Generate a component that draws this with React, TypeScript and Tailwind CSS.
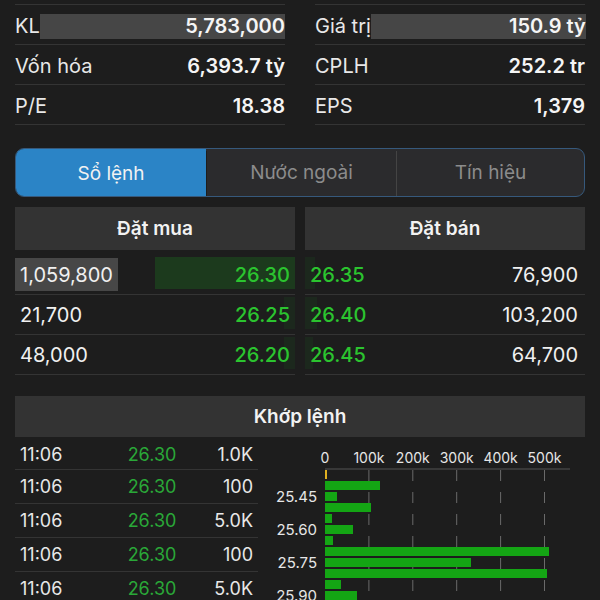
import React from "react";

const leftStats = [
  { l: "KL", v: "5,783,000", hl: true },
  { l: "Vốn hóa", v: "6,393.7 tỷ" },
  { l: "P/E", v: "18.38" },
];
const rightStats = [
  { l: "Giá trị", v: "150.9 tỷ", hl: true },
  { l: "CPLH", v: "252.2 tr" },
  { l: "EPS", v: "1,379" },
];

const bids = [
  { q: "1,059,800", p: "26.30", bar: 135, op: 1, hl: true },
  { q: "21,700", p: "26.25", bar: 6, op: 0.4 },
  { q: "48,000", p: "26.20", bar: 6, op: 0.4 },
];
const asks = [
  { q: "76,900", p: "26.35", bar: 10 },
  { q: "103,200", p: "26.40", bar: 12 },
  { q: "64,700", p: "26.45", bar: 8 },
];

const trades = [
  { t: "11:06", p: "26.30", v: "1.0K" },
  { t: "11:06", p: "26.30", v: "100" },
  { t: "11:06", p: "26.30", v: "5.0K" },
  { t: "11:06", p: "26.30", v: "100" },
  { t: "11:06", p: "26.30", v: "5.0K" },
];

const barWidths = [55, 12, 46, 7, 28, 8, 224, 146, 222, 16, 32];

function StatCol({ items, hlW }: { items: typeof leftStats; hlW: string }) {
  return (
    <div className="flex flex-col border-t border-[#343434]">
      {items.map((s, i) => (
        <div key={i} className="flex h-[40px] items-center border-b border-[#343434] pt-[3px]">
          <span className="shrink-0 whitespace-nowrap text-[20px] text-[#e8e8e8]">{s.l}</span>
          {s.hl ? (
            <div className={`ml-auto flex h-[25px] shrink-0 items-center justify-end bg-[#464646] ${hlW}`}>
              <span className="whitespace-nowrap text-[20px] font-semibold text-[#f5f5f5]">{s.v}</span>
            </div>
          ) : (
            <span className="ml-auto whitespace-nowrap text-[20px] font-semibold text-[#f5f5f5]">{s.v}</span>
          )}
        </div>
      ))}
    </div>
  );
}

function Chart() {
  const ox = 63;
  const step = 43.9;
  const ticks = [0, 1, 2, 3, 4, 5];
  const labels = ["0", "100k", "200k", "300k", "400k", "500k"];
  return (
    <svg width="338" height="163" viewBox="0 0 338 163" className="block">
      {ticks.map((k) => (
        <text
          key={k}
          x={ox + step * k}
          y={25}
          textAnchor="middle"
          fontSize="14"
          fill="#e6e6e6"
          fontFamily="Inter, sans-serif"
        >
          {labels[k]}
        </text>
      ))}
      <line x1={ox} y1={31} x2={308} y2={31} stroke="#555" strokeWidth="1" />
      {ticks.slice(1).map((k) => (
        <line
          key={k}
          x1={ox + step * k}
          y1={32}
          x2={ox + step * k}
          y2={163}
          stroke="#6a6a6a"
          strokeWidth="1"
          strokeDasharray="11 11"
        />
      ))}
      <rect x={ox} y={32} width={2} height={9} fill="#e0b020" />
      {barWidths.map((w, i) => (
        <rect key={i} x={ox} y={43 + i * 11} width={w} height={9} fill="#14a514" />
      ))}
      {[
        ["25.45", 1],
        ["25.60", 4],
        ["25.75", 7],
        ["25.90", 10],
      ].map(([t, i]) => (
        <text
          key={t as string}
          x={55}
          y={43 + (i as number) * 11 + 10}
          textAnchor="end"
          fontSize="15"
          fill="#e6e6e6"
          fontFamily="Inter, sans-serif"
        >
          {t}
        </text>
      ))}
    </svg>
  );
}

export default function App() {
  return (
    <div className="h-[600px] w-[600px] overflow-hidden bg-[#1d1d1d] font-[Inter,sans-serif] text-[#f2f2f2]">
      {/* stats */}
      <div className="grid grid-cols-2 gap-x-[30px] px-[15px] pt-[4px]">
        <StatCol items={leftStats} hlW="w-[245px]" />
        <StatCol items={rightStats} hlW="w-[215px]" />
      </div>

      {/* tabs */}
      <div className="mx-[15px] mt-[23px] flex h-[49px] overflow-hidden rounded-[9px] border border-[#36597c] bg-[#2b2b2d] pt-[2px]">
        <div className="-mt-[2px] flex w-[190px] items-center justify-center bg-[#2b84c6] pt-[4px] text-[19px] text-[#f2f2f2]">
          Sổ lệnh
        </div>
        <div className="flex w-[190px] items-center justify-center border-l border-[#1d1d1d] text-[19px] text-[#8c8c8c]">
          Nước ngoài
        </div>
        <div className="flex flex-1 items-center justify-center border-l border-[#444] text-[19px] text-[#8c8c8c]">
          Tín hiệu
        </div>
      </div>

      {/* order book headers */}
      <div className="mt-[10px] grid grid-cols-2 gap-x-[10px] px-[15px]">
        <div className="flex h-[43px] items-center justify-center bg-[#333333] pt-[2px] text-[19px] font-semibold">
          Đặt mua
        </div>
        <div className="flex h-[43px] items-center justify-center bg-[#333333] pt-[2px] text-[19px] font-semibold">
          Đặt bán
        </div>
      </div>

      {/* order book rows */}
      <div className="grid grid-cols-2 gap-x-[10px] px-[15px] pt-[5px]">
        <div className="flex flex-col">
          {bids.map((b, i) => (
            <div key={i} className="relative flex h-[40px] items-center border-b border-[#343434] pr-[5px]">
              <div
                className="absolute right-0 top-[2px] h-[32px] bg-[#1c3a1d]"
                style={{ width: b.bar + 5, opacity: b.op }}
              />
              {b.hl ? (
                <span className="relative flex h-[33px] w-[103px] items-center bg-[#474747] pl-[5px] text-[20px] text-[#f0f0f0]">
                  {b.q}
                </span>
              ) : (
                <span className="relative pl-[5px] text-[20px] text-[#f0f0f0]">{b.q}</span>
              )}
              <span className="relative ml-auto text-[20px] font-medium text-[#2bc42f]">{b.p}</span>
            </div>
          ))}
        </div>
        <div className="flex flex-col">
          {asks.map((a, i) => (
            <div key={i} className="relative flex h-[40px] items-center border-b border-[#343434] pl-[5px] pr-[7px]">
              <div
                className="absolute left-0 top-[2px] h-[32px] bg-[#1c3a1d] opacity-40"
                style={{ width: a.bar }}
              />
              <span className="relative text-[20px] font-medium text-[#2bc42f]">{a.p}</span>
              <span className="relative ml-auto text-[20px] text-[#f0f0f0]">{a.q}</span>
            </div>
          ))}
        </div>
      </div>

      {/* khop lenh */}
      <div className="mx-[15px] mt-[21px] flex h-[41px] items-center justify-center bg-[#333333] pt-[2px] text-[19px] font-semibold">
        Khớp lệnh
      </div>

      <div className="flex pl-[15px] pt-[2px]">
        <div className="flex w-[243px] flex-col">
          {trades.map((t, i) => (
            <div
              key={i}
              className={`flex items-center border-b border-[#343434] pr-[5px] text-[18px] ${
                i === 0 ? "h-[31px]" : "h-[34px]"
              }`}
            >
              <span className="w-[105px] pl-[5px] text-[#e8e8e8]">{t.t}</span>
              <span className="w-[64px] text-center text-[#2aa838]">{t.p}</span>
              <span className="ml-auto text-[#e8e8e8]">{t.v}</span>
            </div>
          ))}
        </div>
        <div className="ml-[4px] -mt-[1px]">
          <Chart />
        </div>
      </div>
    </div>
  );
}
